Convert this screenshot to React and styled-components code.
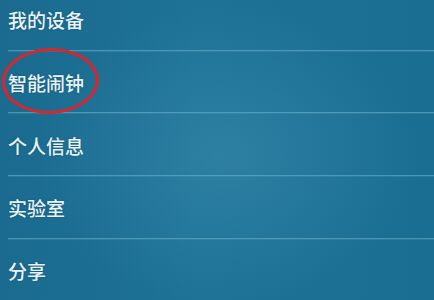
import React from "react";
import styled, { createGlobalStyle } from "styled-components";

const GlobalStyle = createGlobalStyle`
  html, body {
    margin: 0;
    padding: 0;
    width: 434px;
    height: 300px;
    overflow: hidden;
  }
  body {
    font-family: "Noto Sans CJK SC", "Noto Sans", sans-serif;
  }
`;

const Screen = styled.div`
  width: 434px;
  height: 300px;
  overflow: hidden;
  background:
    radial-gradient(ellipse 190px 150px at 52% 52%, rgba(70, 150, 180, 0.4) 0%, rgba(70, 150, 180, 0) 100%),
    linear-gradient(90deg, #1a6b8f 0%, #1d7296 45%, #1a6e92 100%);
`;

const Menu = styled.ul`
  list-style: none;
  margin: -12px 0 0 0;
  padding: 0;
`;

const Row = styled.li`
  position: relative;
  box-sizing: border-box;
  height: 62.67px;
  margin-left: 8px;
  padding-top: 2px;
  display: flex;
  align-items: center;
  border-bottom: 1px solid rgba(120, 190, 215, 0.5);
  box-shadow: 0 1px 0 rgba(90, 160, 190, 0.25);
  color: #e9f2f6;
  font-size: 19px;
  font-weight: 500;
  text-shadow: 0 0 2px rgba(0, 40, 60, 0.35);
`;

const Circle = styled.span`
  position: absolute;
  left: -6px;
  top: -3px;
  width: 97px;
  height: 66px;
  box-sizing: border-box;
  border: 3.5px solid #d8262d;
  border-radius: 50%;
  transform: rotate(-2deg);
  pointer-events: none;
`;

const items = [
  { label: "我的设备" },
  { label: "智能闹钟", circled: true },
  { label: "个人信息" },
  { label: "实验室" },
  { label: "分享" },
];

export default function App() {
  return (
    <>
      <GlobalStyle />
      <Screen>
        <Menu>
          {items.map((item) => (
            <Row key={item.label}>
              {item.label}
              {item.circled && <Circle />}
            </Row>
          ))}
        </Menu>
      </Screen>
    </>
  );
}
